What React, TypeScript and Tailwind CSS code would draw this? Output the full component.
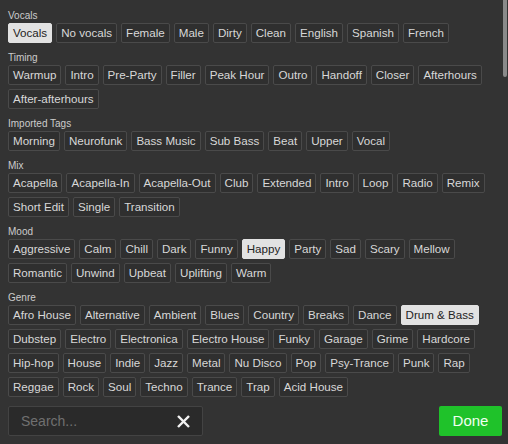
import { useState } from 'react'

const sections: { title: string; tags: string[] }[] = [
  { title: 'Vocals', tags: ['Vocals', 'No vocals', 'Female', 'Male', 'Dirty', 'Clean', 'English', 'Spanish', 'French'] },
  {
    title: 'Timing',
    tags: ['Warmup', 'Intro', 'Pre-Party', 'Filler', 'Peak Hour', 'Outro', 'Handoff', 'Closer', 'Afterhours', 'After-afterhours']
  },
  { title: 'Imported Tags', tags: ['Morning', 'Neurofunk', 'Bass Music', 'Sub Bass', 'Beat', 'Upper', 'Vocal'] },
  {
    title: 'Mix',
    tags: ['Acapella', 'Acapella-In', 'Acapella-Out', 'Club', 'Extended', 'Intro', 'Loop', 'Radio', 'Remix', 'Short Edit', 'Single', 'Transition']
  },
  {
    title: 'Mood',
    tags: ['Aggressive', 'Calm', 'Chill', 'Dark', 'Funny', 'Happy', 'Party', 'Sad', 'Scary', 'Mellow', 'Romantic', 'Unwind', 'Upbeat', 'Uplifting', 'Warm']
  },
  {
    title: 'Genre',
    tags: [
      'Afro House', 'Alternative', 'Ambient', 'Blues', 'Country', 'Breaks', 'Dance', 'Drum & Bass',
      'Dubstep', 'Electro', 'Electronica', 'Electro House', 'Funky', 'Garage', 'Grime', 'Hardcore',
      'Hip-hop', 'House', 'Indie', 'Jazz', 'Metal', 'Nu Disco', 'Pop', 'Psy-Trance', 'Punk', 'Rap',
      'Reggae', 'Rock', 'Soul', 'Techno', 'Trance', 'Trap', 'Acid House'
    ]
  }
]

function App() {
  const [selected, setSelected] = useState<string[]>(['Vocals:Vocals', 'Mood:Happy', 'Genre:Drum & Bass'])
  const [query, setQuery] = useState('')

  const toggle = (key: string) =>
    setSelected((s) => (s.includes(key) ? s.filter((k) => k !== key) : [...s, key]))

  return (
    <div className="relative h-[444px] w-[508px] overflow-hidden bg-[#333333] font-['Liberation_Sans',Arial,sans-serif]">
      <div className="flex flex-col gap-2 pl-2 pr-1 pt-[9px]">
        {sections.map((section) => (
          <div key={section.title}>
            <div className="text-[10px] leading-[13px] text-[#cccccc]">{section.title}</div>
            <div className="mt-px flex flex-wrap gap-1">
              {section.tags.map((tag) => {
                const key = `${section.title}:${tag}`
                const on = selected.includes(key)
                return (
                  <button
                    key={key}
                    onClick={() => toggle(key)}
                    className={`h-5 rounded-[2px] border px-1 text-[11.6px] leading-[18px] whitespace-nowrap ${
                      on ? 'border-[#e2e2e2] bg-[#e2e2e2] text-[#222222]' : 'border-[#4a4a4a] bg-[#2f2f2f] text-[#d8d8d8]'
                    }`}
                  >
                    {tag}
                  </button>
                )
              })}
            </div>
          </div>
        ))}
      </div>

      <div className="mt-[9px] flex items-center justify-between pl-2 pr-[6px]">
        <div className="flex h-[30px] w-[195px] items-center rounded-[2px] border border-[#434343] bg-[#2a2a2a] pl-3 pr-3">
          <input
            value={query}
            onChange={(e) => setQuery(e.target.value)}
            placeholder="Search..."
            className="min-w-0 flex-1 bg-transparent text-[14px] text-[#dddddd] outline-none placeholder:text-[#707070]"
          />
          <button onClick={() => setQuery('')} aria-label="Clear" className="ml-2 flex items-center">
            <svg viewBox="0 0 14 14" className="h-[13px] w-[13px]" fill="none" stroke="#f2f2f2" strokeWidth="2.6" strokeLinecap="square">
              <path d="M2 2 12 12" />
              <path d="M12 2 2 12" />
            </svg>
          </button>
        </div>
        <button className="h-[30px] w-[63px] rounded-[2px] bg-[#1fc22a] text-[15px] text-[#f0fff0]">Done</button>
      </div>

      <div className="absolute right-px top-0 h-[77px] w-1 rounded-b-sm bg-[#8a8a8a]" />
    </div>
  )
}

export default App
